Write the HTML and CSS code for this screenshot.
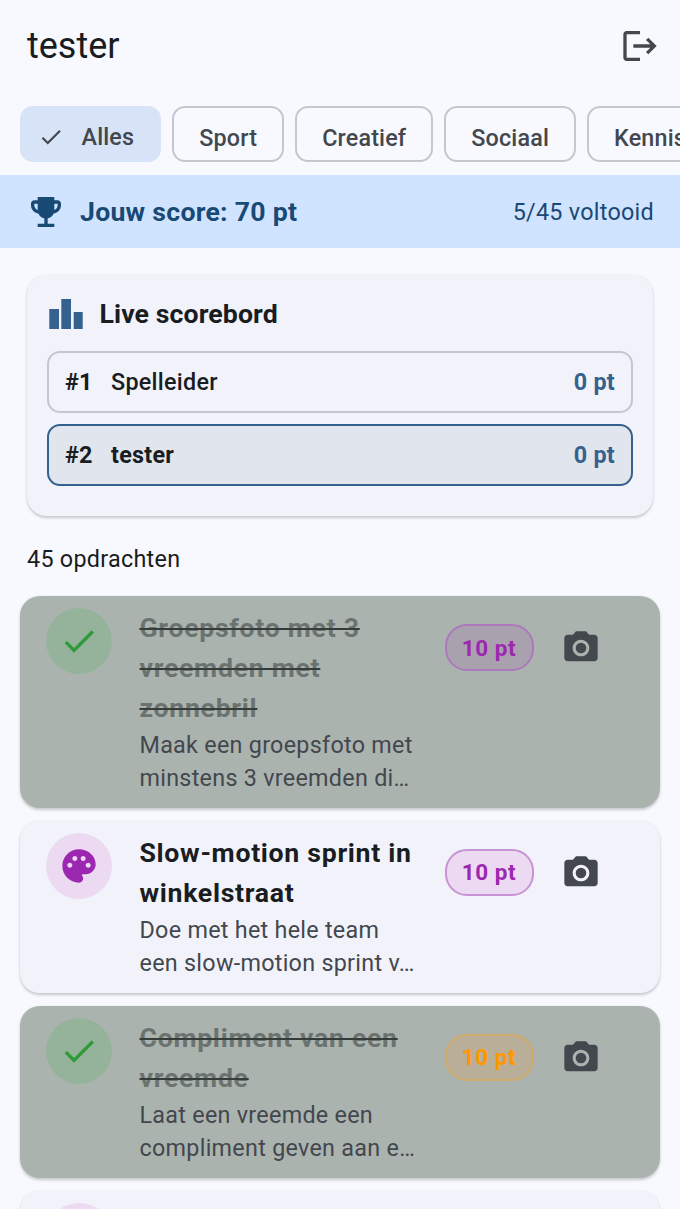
FILE: index.html
```html
<!DOCTYPE html>
<html lang="nl">
<head>
<meta charset="utf-8">
<title>tester</title>
<link rel="stylesheet" href="styles.css">
</head>
<body>
<div class="app">
  <header class="header">
    <h1 class="user">tester</h1>
    <svg class="icon-40 logout" viewBox="0 0 24 24"><path d="M17 7l-1.41 1.41L18.17 11H8v2h10.17l-2.58 2.58L17 17l5-5zM4 5h8V3H4c-1.1 0-2 .9-2 2v14c0 1.1.9 2 2 2h8v-2H4V5z"/></svg>
  </header>
  <nav class="chips">
    <div class="chip selected">
      <svg class="chip-check" viewBox="0 0 24 24"><path d="M9 16.17L4.83 12l-1.42 1.41L9 19 21 7l-1.41-1.41z"/></svg>
      <span>Alles</span>
    </div>
    <div class="chip">Sport</div>
    <div class="chip">Creatief</div>
    <div class="chip">Sociaal</div>
    <div class="chip">Kennis</div>
  </nav>
  <section class="score">
    <svg class="icon-40 trophy" viewBox="0 0 24 24"><path d="M19 5h-2V3H7v2H5c-1.1 0-2 .9-2 2v1c0 2.55 1.92 4.63 4.39 4.94.63 1.5 1.98 2.63 3.61 2.96V19H7v2h10v-2h-4v-3.1c1.63-.33 2.98-1.46 3.61-2.96C19.08 12.63 21 10.55 21 8V7c0-1.1-.9-2-2-2zM5 8V7h2v3.82C5.84 10.4 5 9.3 5 8zm14 0c0 1.3-.84 2.4-2 2.82V7h2v1z"/></svg>
    <strong class="score-value">Jouw score: 70 pt</strong>
    <span class="score-progress">5/45 voltooid</span>
  </section>
  <section class="board">
    <div class="board-head">
      <svg class="board-icon" viewBox="0 0 34 30"><path d="M0.3 10h9.7v20H0.3zM12.3 0h9.7v30h-9.7zM24.7 13h9v17h-9z"/></svg>
      <h2 class="board-title">Live scorebord</h2>
    </div>
    <div class="rank">
      <span class="rank-no">#1</span><span class="rank-name">Spelleider</span><span class="rank-pt">0 pt</span>
    </div>
    <div class="rank me">
      <span class="rank-no">#2</span><span class="rank-name">tester</span><span class="rank-pt">0 pt</span>
    </div>
  </section>
  <p class="count">45 opdrachten</p>
  <article class="task done">
    <div class="avatar"><svg class="icon-40" viewBox="0 0 24 24"><path d="M9 16.17L4.83 12l-1.42 1.41L9 19 21 7l-1.41-1.41z"/></svg></div>
    <div class="task-text">
      <h3 class="task-title">Groepsfoto met 3 vreemden met zonnebril</h3>
      <p class="task-desc">Maak een groepsfoto met minstens 3 vreemden di…</p>
    </div>
    <span class="badge purple">10 pt</span>
    <svg class="camera" viewBox="0 0 24 24"><circle cx="12" cy="12" r="3.2"/><path d="M9 2L7.17 4H4c-1.1 0-2 .9-2 2v12c0 1.1.9 2 2 2h16c1.1 0 2-.9 2-2V6c0-1.1-.9-2-2-2h-3.17L15 2H9zm3 15c-2.76 0-5-2.24-5-5s2.24-5 5-5 5 2.24 5 5-2.24 5-5 5z"/></svg>
  </article>
  <article class="task">
    <div class="avatar purple-bg"><svg class="icon-40" viewBox="0 0 24 24"><path d="M12 2C6.49 2 2 6.49 2 12s4.49 10 10 10c1.38 0 2.5-1.12 2.5-2.5 0-.61-.23-1.2-.64-1.67-.08-.1-.13-.21-.13-.33 0-.28.22-.5.5-.5H16c3.31 0 6-2.69 6-6 0-4.96-4.49-9-10-9zm5.5 11c-.83 0-1.5-.67-1.5-1.5s.67-1.5 1.5-1.5 1.5.67 1.5 1.5-.67 1.5-1.5 1.5zm-3-4c-.83 0-1.5-.67-1.5-1.5S13.67 6 14.5 6s1.5.67 1.5 1.5S15.33 9 14.5 9zM5 11.5c0-.83.67-1.5 1.5-1.5s1.5.67 1.5 1.5S7.33 13 6.5 13 5 12.33 5 11.5zm6-4c0 .83-.67 1.5-1.5 1.5S8 8.33 8 7.5 8.67 6 9.5 6s1.5.67 1.5 1.5z"/></svg></div>
    <div class="task-text">
      <h3 class="task-title">Slow-motion sprint in winkelstraat</h3>
      <p class="task-desc">Doe met het hele team een slow-motion sprint v…</p>
    </div>
    <span class="badge purple">10 pt</span>
    <svg class="camera" viewBox="0 0 24 24"><circle cx="12" cy="12" r="3.2"/><path d="M9 2L7.17 4H4c-1.1 0-2 .9-2 2v12c0 1.1.9 2 2 2h16c1.1 0 2-.9 2-2V6c0-1.1-.9-2-2-2h-3.17L15 2H9zm3 15c-2.76 0-5-2.24-5-5s2.24-5 5-5 5 2.24 5 5-2.24 5-5 5z"/></svg>
  </article>
  <article class="task done">
    <div class="avatar"><svg class="icon-40" viewBox="0 0 24 24"><path d="M9 16.17L4.83 12l-1.42 1.41L9 19 21 7l-1.41-1.41z"/></svg></div>
    <div class="task-text">
      <h3 class="task-title">Compliment van een vreemde</h3>
      <p class="task-desc">Laat een vreemde een compliment geven aan e…</p>
    </div>
    <span class="badge orange">10 pt</span>
    <svg class="camera" viewBox="0 0 24 24"><circle cx="12" cy="12" r="3.2"/><path d="M9 2L7.17 4H4c-1.1 0-2 .9-2 2v12c0 1.1.9 2 2 2h16c1.1 0 2-.9 2-2V6c0-1.1-.9-2-2-2h-3.17L15 2H9zm3 15c-2.76 0-5-2.24-5-5s2.24-5 5-5 5 2.24 5 5-2.24 5-5 5z"/></svg>
  </article>
  <article class="task">
    <div class="avatar purple-bg"></div>
  </article>
</div>
</body>
</html>
```

FILE: styles.css
```css
* { box-sizing: border-box; }
html, body { margin: 0; height: 100%; overflow: hidden; }
body { background: #f8f9ff; color: #191c20; font-family: Roboto, "Liberation Sans", sans-serif; }
.app { width: 680px; height: 1209px; overflow: hidden; }
h1, h2, h3, p { margin: 0; }
svg { display: block; fill: currentColor; flex: none; }
.icon-40 { width: 40px; height: 40px; }

.header { height: 92px; display: flex; align-items: center; justify-content: space-between; padding: 0 20px 0 27px; }
.user { font-size: 36px; font-weight: 400; line-height: 46px; }
.logout { color: #43474e; }

.chips { display: flex; gap: 11px; padding: 14px 0 0 20px; height: 83px; overflow: hidden; }
.chip { flex: none; height: 56px; padding: 8px 25px 0 25px; display: flex; align-items: center; border: 2px solid #c3c7cf; border-radius: 13px; font-size: 23.33px; font-weight: 500; letter-spacing: 0.17px; color: #43474e; }
.chip.selected { background: #d7e3f7; border-color: #d7e3f7; padding: 6px 25px 0 16px; gap: 17.5px; }
.chip-check { width: 26px; height: 26px; }

.score { height: 73px; background: #d1e4ff; color: #194975; display: flex; align-items: center; padding: 0 26px; }
.trophy { margin-right: 14px; }
.score-value { font-size: 26.67px; font-weight: 700; letter-spacing: 0.25px; flex: 1; }
.score-progress { font-size: 23.33px; letter-spacing: 0.28px; }

.board { margin: 27px 27px 0; height: 241px; padding: 24px 20px 0; background: #f2f3fa; border-radius: 20px; box-shadow: 0 1.5px 3px rgba(0,0,0,.2); }
.board-head { display: flex; align-items: center; gap: 16.5px; height: 30px; margin-bottom: 22px; padding-left: 2px; }
.board-icon { width: 34px; height: 30px; color: #36618e; }
.board-title { font-size: 26.67px; font-weight: 700; letter-spacing: 0.1px; }
.rank { height: 62px; margin-bottom: 11px; display: flex; align-items: center; padding: 0 16px; border: 2px solid #c3c7cf; border-radius: 13px; font-size: 23.33px; letter-spacing: 0.28px; }
.rank.me { background: #e1e5ee; border-color: #36618e; font-weight: 700; }
.rank-no { font-weight: 700; width: 46px; }
.rank-name { flex: 1; font-weight: 500; }
.rank.me .rank-name { font-weight: 700; }
.rank-pt { color: #36618e; font-weight: 700; }

.count { height: 80px; padding-top: 27px; padding-left: 27px; font-size: 23.33px; line-height: 33px; letter-spacing: 0.28px; }

.task { margin: 0 20px 13.33px; padding: 12px 26px 12px; display: flex; align-items: flex-start; background: #f2f3fa; border-radius: 20px; box-shadow: 0 1.5px 3px rgba(0,0,0,.2); }
.avatar { flex: none; width: 66px; height: 66px; border-radius: 50%; display: flex; align-items: center; justify-content: center; color: #9c27b0; }
.purple-bg { background: #ebdaf1; }
.task-text { width: 282px; margin: 0 23px 0 27.5px; flex: none; }
.task-title { font-size: 26.67px; line-height: 40px; font-weight: 700; letter-spacing: 0.7px; margin-bottom: 1px; }
.task-desc { font-size: 23.33px; line-height: 33.33px; letter-spacing: 0.28px; color: #43474e; }
.badge { flex: none; margin-top: 16px; width: 89px; height: 47px; display: flex; align-items: center; justify-content: center; border: 2px solid; border-radius: 22px; font-size: 22.5px; font-weight: 700; letter-spacing: 0.6px; }
.badge.purple { color: #9c27b0; background: #ebdaf1; border-color: #c893d6; }
.camera { width: 40px; height: 40px; margin: 20px 0 0 27.5px; color: #43474e; }

.done { background: #abb3af; }
.done .avatar { background: #95b39b; color: #2f9a3a; }
.done .task-title { color: #6b7370; text-decoration: line-through; text-decoration-color: #353c3a; text-decoration-thickness: 2px; }
.done .badge.purple { background: #a9a1ae; border-color: #ad78bd; }
.done .badge.orange { color: #ff9800; background: #b9ae98; border-color: #cfaa6a; }
```
